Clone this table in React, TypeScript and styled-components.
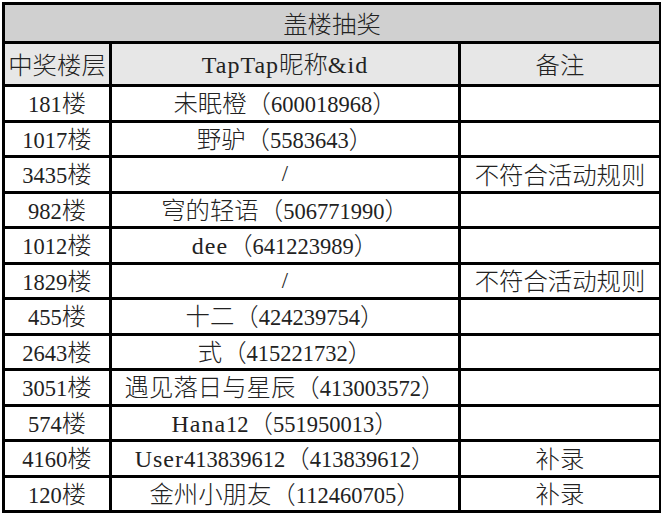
import React, { FC } from "react";
import styled, { createGlobalStyle } from "styled-components";

const GlobalStyle = createGlobalStyle`
  html, body {
    margin: 0;
    padding: 0;
    background: #ffffff;
  }
  body {
    width: 661px;
    height: 516px;
    overflow: hidden;
  }
`;

interface Winner {
  floor: string;
  name: string;
  note?: string;
}

const WINNERS: Winner[] = [
  { floor: "181楼", name: "未眠橙（600018968）" },
  { floor: "1017楼", name: "野驴（5583643）" },
  { floor: "3435楼", name: "/", note: "不符合活动规则" },
  { floor: "982楼", name: "穹的轻语（506771990）" },
  { floor: "1012楼", name: "dee（641223989）" },
  { floor: "1829楼", name: "/", note: "不符合活动规则" },
  { floor: "455楼", name: "十二（424239754）" },
  { floor: "2643楼", name: "式（415221732）" },
  { floor: "3051楼", name: "遇见落日与星辰（413003572）" },
  { floor: "574楼", name: "Hana12（551950013）" },
  { floor: "4160楼", name: "User413839612（413839612）", note: "补录" },
  { floor: "120楼", name: "金州小朋友（112460705）", note: "补录" },
];

const Wrapper = styled.div`
  padding: 2px 0 0 2px;
`;

const Table = styled.table`
  border-collapse: collapse;
  table-layout: fixed;
  width: 657px;
  color: #222222;
`;

const Cell = styled.td<{ $bg?: string; $height: number }>`
  border: 3px solid #000;
  height: ${(p) => p.$height}px;
  padding: 0;
  text-align: center;
  vertical-align: middle;
  white-space: nowrap;
  line-height: 1;
  background: ${(p) => p.$bg ?? "#ffffff"};
`;

const Letters = styled.span`
  font-family: "Liberation Serif", "Times New Roman", serif;
  font-size: 24px;
  letter-spacing: 1px;
`;

const Digits = styled.span`
  font-family: "Liberation Serif", "Times New Roman", serif;
  font-size: 22.5px;
`;

const Cjk = styled.span`
  font-family: "Noto Sans CJK SC", sans-serif;
  font-weight: 300;
  font-size: 24.4px;
`;

const CJK_RUN = /[\u3000-\u9fff\uff00-\uffef]/;
const LETTER_RUN = /[A-Za-z&]/;

// split text into CJK, letter and digit runs so each gets its own face
const Mixed: FC<{ text: string }> = ({ text }) => {
  const parts =
    text.match(/[\u3000-\u9fff\uff00-\uffef]+|[A-Za-z&]+|[^A-Za-z&\u3000-\u9fff\uff00-\uffef]+/g) ?? [];
  return (
    <>
      {parts.map((part, i) => {
        if (CJK_RUN.test(part)) return <Cjk key={i}>{part}</Cjk>;
        if (LETTER_RUN.test(part)) return <Letters key={i}>{part}</Letters>;
        return <Digits key={i}>{part}</Digits>;
      })}
    </>
  );
};

const App: FC = () => {
  return (
    <Wrapper>
      <GlobalStyle />
      <Table>
        <colgroup>
          <col style={{ width: 107 }} />
          <col style={{ width: 349 }} />
          <col style={{ width: 201 }} />
        </colgroup>
        <tbody>
          <tr>
            <Cell colSpan={3} $bg="#d0d0d0" $height={36}>
              <Mixed text="盖楼抽奖" />
            </Cell>
          </tr>
          <tr>
            <Cell $bg="#e7e7e7" $height={40}>
              <Mixed text="中奖楼层" />
            </Cell>
            <Cell $bg="#e7e7e7" $height={40}>
              <Mixed text="TapTap昵称&id" />
            </Cell>
            <Cell $bg="#e7e7e7" $height={40}>
              <Mixed text="备注" />
            </Cell>
          </tr>
          {WINNERS.map((w) => (
            <tr key={w.floor}>
              <Cell $height={32.5}>
                <Mixed text={w.floor} />
              </Cell>
              <Cell $height={32.5}>
                <Mixed text={w.name} />
              </Cell>
              <Cell $height={32.5}>{w.note ? <Mixed text={w.note} /> : null}</Cell>
            </tr>
          ))}
        </tbody>
      </Table>
    </Wrapper>
  );
};

export default App;
